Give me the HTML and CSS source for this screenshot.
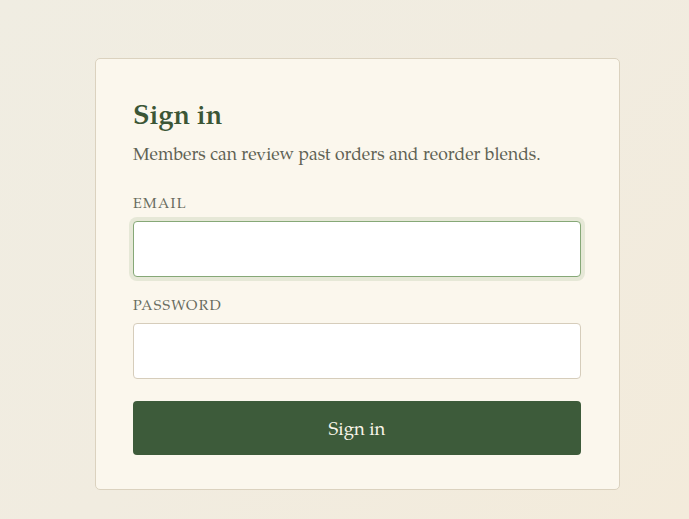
FILE: index.html
```html
<!DOCTYPE html>
<html lang="en">
<head>
<meta charset="utf-8">
<title>Sign in</title>
<link rel="stylesheet" href="styles.css">
</head>
<body>
<main class="page">
  <form class="card">
    <h1 class="title">Sign in</h1>
    <p class="subtitle">Members can review past orders and reorder blends.</p>
    <div class="field">
      <label class="label" for="email">Email</label>
      <input class="input input-focus" id="email" type="email">
    </div>
    <div class="field">
      <label class="label" for="password">Password</label>
      <input class="input" id="password" type="password">
    </div>
    <button class="button" type="button">Sign in</button>
  </form>
</main>
</body>
</html>
```
FILE: styles.css
```css
html, body {
  margin: 0;
  height: 100%;
}
body {
  background: linear-gradient(135deg, #f0ede2 0%, #f1ece0 50%, #f3ebdb 100%);
  font-family: "TeX Gyre Pagella", "Palatino Linotype", Palatino, "Liberation Serif", serif;
}
.page {
  padding: 58px 0 0 95px;
}
.card {
  box-sizing: border-box;
  width: 525px;
  padding: 38px 38px 34px 37px;
  background: #fbf7ed;
  border: 1px solid #dbd2bf;
  border-radius: 5px;
}
.title {
  margin: 0 0 1px;
  font-size: 27px;
  font-weight: bold;
  line-height: 43px;
  color: #3b5636;
}
.subtitle {
  margin: 0 0 23px;
  font-size: 17.5px;
  line-height: 30px;
  color: #5f6254;
}
.field {
  margin-bottom: 19px;
}
.label {
  display: block;
  margin-bottom: 4px;
  font-size: 14.4px;
  line-height: 23px;
  letter-spacing: 1.3px;
  text-transform: uppercase;
  color: #676b5e;
}
.input {
  display: block;
  box-sizing: border-box;
  width: 448px;
  height: 56px;
  margin: 0;
  padding: 0 14px;
  background: #fff;
  border: 1px solid #d6cdbb;
  border-radius: 4px;
  font: inherit;
  outline: none;
}
.input-focus {
  border-color: #86a877;
  box-shadow: 0 0 0 4px #e6e8d7;
}
.button {
  display: block;
  box-sizing: border-box;
  width: 448px;
  height: 54px;
  margin: 22px 0 0;
  padding: 5px 0 0;
  border: 0;
  border-radius: 4px;
  background: #3d5b3a;
  color: #f8f4e8;
  font: inherit;
  font-size: 18.5px;
  cursor: pointer;
}
```
